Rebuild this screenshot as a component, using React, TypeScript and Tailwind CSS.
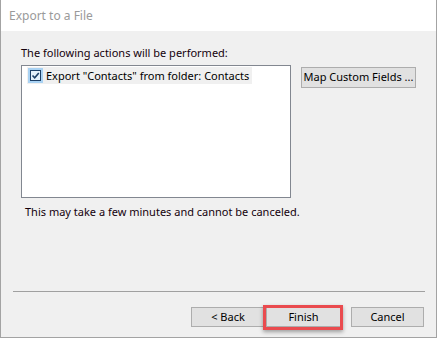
import React from "react";

const font = { fontFamily: '"Noto Sans", "Open Sans", Arial, sans-serif' };

function Check() {
  return (
    <svg width="15" height="15" viewBox="0 0 15 15" className="shrink-0">
      <rect x="0" y="0" width="15" height="15" fill="#a9d2f3" />
      <rect x="2.5" y="2.5" width="10" height="10" fill="#e3f0fb" stroke="#1c3f66" strokeWidth="1" />
      <polyline points="4.5,7.5 6.7,9.8 10.8,4.9" fill="none" stroke="#1c3f66" strokeWidth="1.6" />
    </svg>
  );
}

function Btn({ label, className = "" }: { label: string; className?: string }) {
  return (
    <div
      className={`h-[20px] flex items-center justify-center whitespace-nowrap border border-[#adadad] bg-[#e1e1e1] text-[11px] text-black ${className}`}
    >
      {label}
    </div>
  );
}

export default function App() {
  return (
    <div
      className="w-[437px] h-[338px] flex flex-col bg-[#f0f0f0] border-l border-r border-b border-[#a3a3a3] overflow-hidden"
      style={font}
    >
      {/* title bar */}
      <div className="h-[31px] shrink-0 bg-white flex items-center pl-[8px] text-[12px] text-[#9a9a9a] whitespace-nowrap">
        Export to a File
      </div>

      <div className="flex flex-col flex-1 pl-[20px] pr-[11px] whitespace-nowrap">
        <div className="mt-[14px] h-[16px] leading-[16px] text-[11px] text-[#14000c]">
          The following actions will be performed:
        </div>

        <div className="flex mt-[4px]">
          <div className="w-[270px] h-[133px] border border-[#828790] bg-white pt-[1px] pl-[5px]">
            <div className="flex items-center h-[17px] w-[225px] bg-[#f0f0f0]">
              <div className="ml-[1px]">
                <Check />
              </div>
              <span className="ml-[3px] text-[11px] text-black leading-[16px]">
                Export "Contacts" from folder: Contacts
              </span>
            </div>
          </div>
          <div className="ml-[10px] mt-[2px] w-[115px] h-[21px] flex items-center justify-center border border-[#adadad] bg-[#e1e1e1] text-[11px] text-black">
            Map Custom Fields ...
          </div>
        </div>

        <div className="mt-[6px] pl-[4px] h-[16px] leading-[16px] text-[11px] text-[#14000c]">
          This may take a few minutes and cannot be canceled.
        </div>

        <div className="mt-[71px] -ml-[8px] h-px bg-[#a0a0a0]" />

        <div className="flex justify-end mt-[15px] pr-[1px]">
          <Btn label="< Back" className="w-[74px]" />
          <div className="relative ml-[1px]">
            <Btn label="Finish" className="w-[75px]" />
            <span className="absolute -left-[3px] -right-[2px] -top-[2px] -bottom-[3px] border-[3px] border-[#ea4b4f] shadow-[0_2px_4px_rgba(0,0,0,0.35)]" />
          </div>
          <Btn label="Cancel" className="w-[73px] ml-[10px]" />
        </div>
      </div>
    </div>
  );
}
